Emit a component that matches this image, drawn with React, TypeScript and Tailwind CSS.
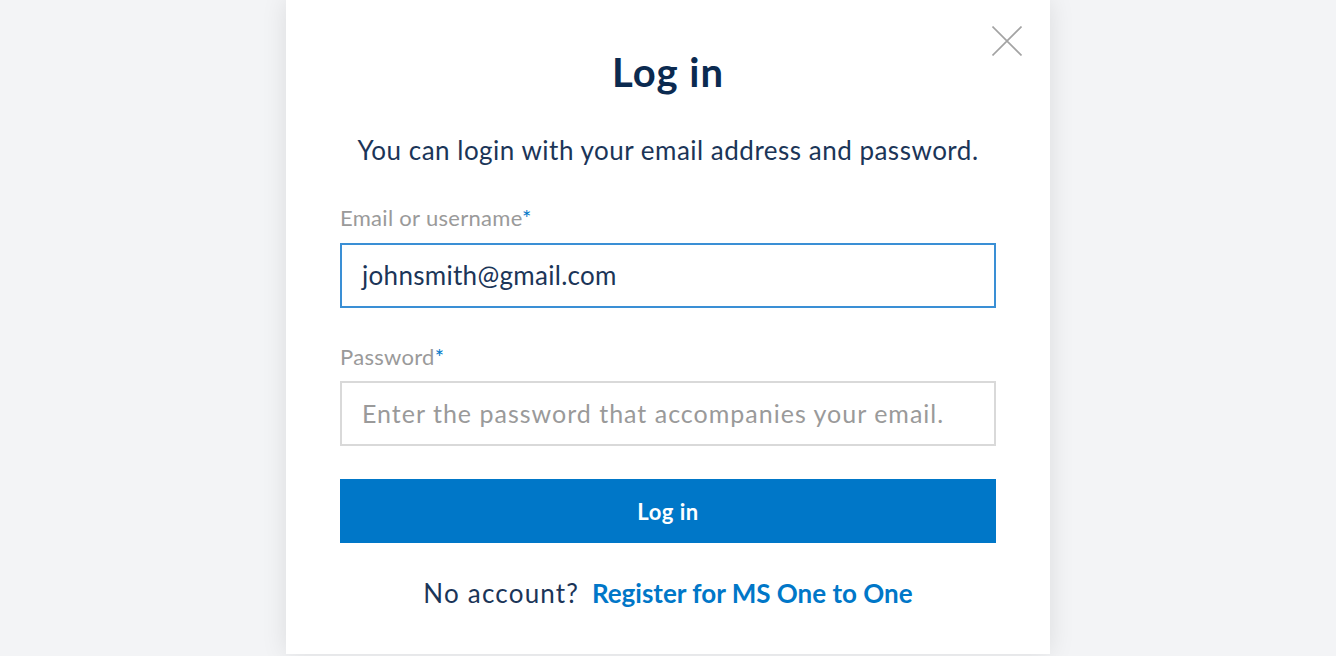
import React from "react";

export default function App() {
  const font = { fontFamily: "Lato, 'Open Sans', sans-serif" };
  return (
    <div className="w-full h-[656px] bg-[#f3f4f6] flex justify-center overflow-hidden" style={font}>
      <div className="relative w-[764px] h-[654px] bg-white shadow-[0_0_24px_rgba(0,0,0,0.10)] overflow-hidden flex flex-col items-stretch px-[54px]">
        <button className="absolute top-[26px] right-[28px] w-[30px] h-[30px]" aria-label="Close">
          <svg viewBox="0 0 30 30" width="30" height="30">
            <path d="M0.5 0.5 L29.5 29.5 M29.5 0.5 L0.5 29.5" stroke="#a3a3a3" strokeWidth="1.6" fill="none" />
          </svg>
        </button>
        <h1 className="shrink-0 mt-[49px] text-center text-[40px] leading-[46px] font-bold tracking-[1px] text-[#0b2a50]">Log in</h1>
        <p className="shrink-0 mt-[39px] text-center text-[26px] leading-[32px] tracking-[0.5px] text-[#1b3558]">
          You can login with your email address and password.
        </p>
        <label className="shrink-0 mt-[38px] text-[22px] leading-[28px] tracking-[0.3px] text-[#9a9a9a]">
          Email or username<span className="text-[#0077c8]">*</span>
        </label>
        <div className="shrink-0 mt-[11px] h-[65px] border-2 border-[#3a8fd5] flex items-center px-[20px] text-[26px] tracking-[0.3px] text-[#1b3558]">
          johnsmith@gmail.com
        </div>
        <label className="shrink-0 mt-[35px] text-[22px] leading-[28px] tracking-[0.3px] text-[#9a9a9a]">
          Password<span className="text-[#0077c8]">*</span>
        </label>
        <div className="shrink-0 mt-[10px] h-[65px] border-2 border-[#d9d9d9] flex items-center px-[20px] text-[25px] tracking-[1px] text-[#9a9a9a]">
          Enter the password that accompanies your email.
        </div>
        <button className="shrink-0 mt-[33px] h-[64px] bg-[#0077c8] text-white text-[22px] tracking-[0.5px] font-bold">Log in</button>
        <p className="shrink-0 mt-[34px] text-center text-[26px] leading-[32px] text-[#1b3558]">
          <span className="tracking-[1.2px]">No account?</span>{" "}
          <a className="ml-[6px] font-bold text-[#0077c8]">Register for MS One to One</a>
        </p>
        <p className="shrink-0 mt-[38px] text-center text-[25px] leading-[32px] text-[#0077c8]">Forgot your password?</p>
      </div>
    </div>
  );
}
